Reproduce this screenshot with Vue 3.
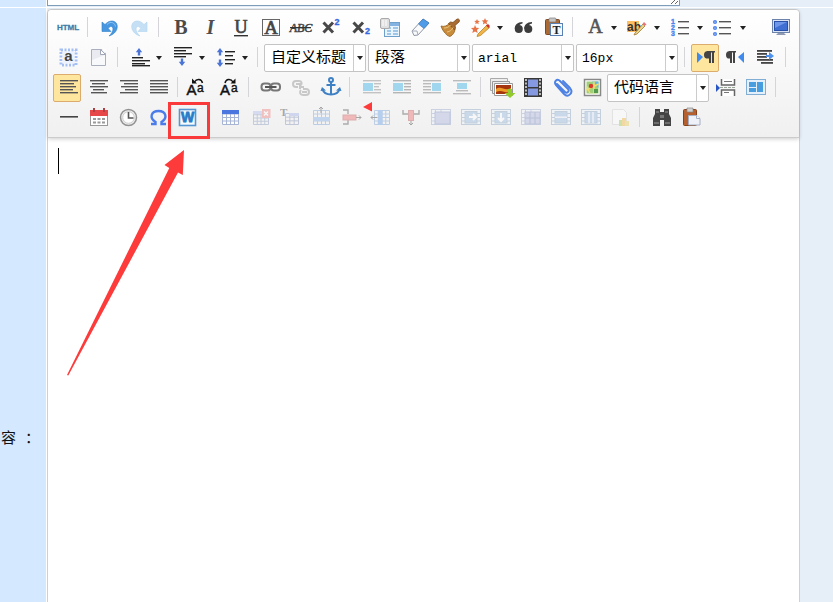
<script setup>
import { ref } from 'vue'

const rule = (y, x1, x2, c = '#333', h = 1.4) =>
  `<rect x="${x1}" y="${y}" width="${x2 - x1}" height="${h}" fill="${c}"/>`
const rules = (list, c, h) => list.map(([y, a, b]) => rule(y, a, b, c, h)).join('')
const serif = 'font-family="Liberation Serif" font-weight="700"'
const sans = 'font-family="Liberation Sans" font-weight="700"'
const up = (x, y) => `<path d="M${x} ${y}l3.2 4.2h-2v3.3h-2.4v-3.3h-2z" fill="#4a74d8"/>`
const down = (x, y) => `<path d="M${x} ${y}l3.2-4.2h-2v-3.3h-2.4v3.3h-2z" fill="#4a74d8"/>`
const grid = (x, y, w, h, nx, ny, c) => {
  let d = `M${x} ${y}h${w}v${h}h${-w}z`
  for (let i = 1; i < nx; i++) d += `M${x + (w * i) / nx} ${y}v${h}`
  for (let i = 1; i < ny; i++) d += `M${x} ${y + (h * i) / ny}h${w}`
  return `<path d="${d}" fill="none" stroke="${c}"/>`
}
const cells = (inner) =>
  `<rect x="1.5" y="2.5" width="19" height="15" fill="#eef2fb" stroke="#8fa3c8"/><path d="M5.5 2.5v15M1.5 6.5h4M1.5 10.5h4M1.5 14h4M11 2.5v3" stroke="#8fa3c8" fill="none"/>${inner}`
const strip = (inner) =>
  `<rect x="1.5" y="2.5" width="19" height="15" fill="#eef4fb" stroke="#7f9dc0"/><path d="M1.5 6.5h19M1.5 10.5h19M1.5 14h19" stroke="#7f9dc0"/><rect x="5" y="4.5" width="12" height="11.5" fill="#8db4dc" stroke="#7f9dc0"/>${inner}`
const undoPath = 'M3 5v9.5h9L9.3 11.5C11 8.5 14 9 14 12c0 2.5-1.8 5-4 7 6-2 8.7-6 8.2-10.5C17.5 3.5 11 2 6 7.5z'

const icons = {
  html: `<text x="10" y="13" text-anchor="middle" font-size="8" ${sans} fill="#3b7ca8" stroke="#3b7ca8" stroke-width=".3">HTML</text>`,
  undo: `<path d="${undoPath}" fill="#4697e0" stroke="#2f7fcb" stroke-width=".6"/><path d="M8 7.5c4-4 8-1.5 8.5 2" stroke="#8cc5f3" fill="none"/>`,
  redo: `<g transform="matrix(-1 0 0 1 21 0)"><path d="${undoPath}" fill="#c5e0f5" stroke="#b0d3ee" stroke-width=".6"/></g>`,
  bold: `<text x="11" y="17" text-anchor="middle" font-size="20" ${serif} fill="#4a4a4a">B</text>`,
  italic: `<text x="10.5" y="17" text-anchor="middle" font-size="20" font-style="italic" ${serif} fill="#4f4f4f">I</text>`,
  underline: `<text x="11" y="16" text-anchor="middle" font-size="18" font-family="Liberation Serif" fill="#444" stroke="#444" stroke-width=".7">U</text>` + rule(18, 4, 18),
  fontborder: `<rect x="2.5" y="2.5" width="17" height="16" fill="none" stroke="#666"/><text x="11" y="16.5" text-anchor="middle" font-size="19" font-family="Liberation Serif" fill="#444" stroke="#444" stroke-width=".7">A</text>`,
  strike: `<text x="11" y="15" text-anchor="middle" font-size="12" font-style="italic" font-family="Liberation Serif" fill="#444" stroke="#444" stroke-width=".5" >ABC</text>` + rule(10, 0, 21, '#333', 1.3),
  sup: `<path d="M3.5 5.5l9.5 10M13 5.5l-9.5 10" stroke="#484848" stroke-width="3"/><text x="14.5" y="8" font-size="9" ${sans} fill="#3568e0" stroke="#3568e0" stroke-width=".3">2</text>`,
  sub: `<path d="M3.5 5.5l9.5 10M13 5.5l-9.5 10" stroke="#484848" stroke-width="3"/><text x="15" y="17" font-size="9" ${sans} fill="#3568e0" stroke="#3568e0" stroke-width=".3">2</text>`,
  autotype: `<rect x="4.5" y="5.5" width="15" height="14" fill="#eaf4fd" stroke="#6f9fcb"/><path d="M5 7.5h14" stroke="#84b3e1" stroke-width="3"/><path d="M7 11h4m2 0h5M7 14h4m2 0h5M7 17h4m2 0h5" stroke="#88b6e1" stroke-width="1.5"/><rect x=".5" y="1.5" width="9" height="10" rx="1.5" fill="#e0e0e0" stroke="#aaa"/><path d="M3 3v6M6 3v6" stroke="#fff"/>`,
  eraser: `<path d="M2 14L13 2l6 4L8 18l-4 .5z" fill="#fafafa" stroke="#8c98ab"/><path d="M8.5 7L13 2l6 4-5 5.5z" fill="#4e9ce8" stroke="#3978be" stroke-width=".7"/><path d="M8 18l-1-4-5 0" fill="none" stroke="#a6adb9"/>`,
  brush: `<path d="M1 9c3 1 6 0 8-2.500l6 5.500c0 3-2 6-5 7.500-2-.5-3.500-1.500-4.500-3C3.500 14.500 2 12 1 9z" fill="#c98b3c" stroke="#94601d" stroke-width=".8"/><path d="M8.500 6.500l2-1.500 2.500.5 4-3.500c2.500-.5 3 1.500 2 3l-4 3.500.500 2.500-1 2z" fill="#a96c33" stroke="#7c4a17" stroke-width=".8"/><path d="M4 11c3 0 5-1 6.500-3M7 15c3-.5 5-2 6-4.500" fill="none" stroke="#ecc57c"/>`,
  wand: `<path d="M8 17l9-9 2.5 2.5-9 8-3.5 1z" fill="#f0b548" stroke="#b98026" stroke-width=".8"/><path d="M16 8.500l2-1.500 2 2-1.500 2z" fill="#c43335"/><g fill="#e87347"><path d="M5 8l1.200 2.700 3 .3-2.300 2 .8 3L5 14.500 2.300 16l.8-3L1 11l3-.3z"/><path d="M7 2l.8 1.700 2 .3-1.500 1.300.4 2L7 6.300 5.300 7.300l.4-2L4.200 4l2-.3zM15 1l1 2.200 2.400.3-1.800 1.600.5 2.400L15 6.300l-2.100 1.200.5-2.400-1.800-1.600 2.400-.3z"/></g>`,
  quote: `<g fill="#3c3c3c"><circle cx="5.800" cy="12" r="4"/><path d="M1.800 12C1.500 8 4.500 5 9.500 5v1.500C7 7 6 8 6 10z"/><circle cx="15.300" cy="12" r="4"/><path d="M11.300 12C11 8 14 5 19 5v1.500c-2.500.5-3.500 1.500-3.500 3.500z"/></g>`,
  pasteText: `<rect x="2.5" y="2.5" width="14" height="15" rx="1" fill="#a96a35" stroke="#7f4820"/><rect x="6" y="1" width="7" height="4" rx="1" fill="#c6c6c6" stroke="#7d7d7d" stroke-width=".7"/><rect x="7.5" y="6.5" width="12" height="12" fill="#f4f8ff" stroke="#5a80b3"/><text x="13.5" y="16.5" text-anchor="middle" font-size="12" ${serif} fill="#222">T</text>`,
  color: `<text x="11.5" y="16" text-anchor="middle" font-size="20" font-family="Liberation Serif" fill="#555" stroke="#555" stroke-width=".6">A</text>`,
  highlight: `<rect x="0" y="4" width="12" height="11" fill="#fbc063"/><text x="0" y="13.5" font-size="12" ${sans} fill="#333">ab</text><path d="M8 16l8-9 2 2-8 8-3 1z" fill="#ead48a" stroke="#a07a36" stroke-width=".8"/><path d="M15.5 7l1.5-2 2.5 2.5-2 1.5z" fill="#e5757c"/>`,
  ol: `<g font-size="7" ${sans} fill="#4f82ed" stroke="#4f82ed" stroke-width=".4"><text x="1" y="7">1</text><text x="1" y="13">2</text><text x="1" y="19">3</text></g>` + rules([[4, 8, 19], [10, 8, 19], [16, 8, 19]], '#555'),
  ul: `<g fill="none" stroke="#4f82ed" stroke-width="1.5"><circle cx="2" cy="5" r="1.3"/><circle cx="2" cy="11" r="1.3"/><circle cx="2" cy="17" r="1.3"/></g>` + rules([[4, 6, 18], [10, 6, 18], [16, 6, 18]], '#555'),
  screen: `<rect x="1.5" y="2.5" width="17" height="13" fill="#d9e3f5" stroke="#6e83aa"/><rect x="3.5" y="4.5" width="13" height="9" fill="#3f6fd2" stroke="#2850a7"/><path d="M4 5h12L4 11z" fill="#6e97ea"/><path d="M7 16h6l2 2H5z" fill="#8e9bb2"/>`,
  anchorText: `<rect x="3" y="3" width="15" height="15" fill="none" stroke="#a5bff4" stroke-width="3" stroke-dasharray="2 1.5"/><rect x="4.5" y="4.5" width="12" height="12" fill="#edf2ff"/><text x="10.5" y="14" text-anchor="middle" font-size="15" ${sans} fill="#444">a</text>`,
  page: `<path d="M3.5 2.5h14v16h-14z" fill="#e9ebf0" stroke="#a9afbd"/><path d="M4 13L17 8v10H4z" fill="#f8f9fb"/><path d="M12.5 2.5l5 5h-5z" fill="#fff" stroke="#a0a7b7"/><path d="M13.5 2h4.5v4.5z" fill="#fdfdfd"/>`,
  rowBefore: up(10, 1) + rules([[10, 3, 14], [13, 3, 21], [16, 3, 16], [18, 3, 21]], '#222', 1.4),
  rowAfter: rules([[0, 2, 20], [3, 2, 14], [6, 2, 20], [9, 2, 14]], '#222', 1.4) + down(10, 19),
  lineHeight: up(5, 1) + down(5, 20) + rules([[4, 10, 20], [8, 10, 18], [12, 10, 20], [16, 10, 18]], '#222', 1.4),
  ltr: `<path d="M1 5l6 5-6 6z" fill="#4089ed"/><path d="M8 8c0-4 3-4 5-4h6v1.500h-1V16h-2V5.500h-1V16h-2v-4.500C10 12 8 11 8 8z" fill="#444"/>`,
  rtl: `<path d="M18 5l-6 5 6 6z" fill="#4089ed"/><path d="M0 8c0-4 3-4 5-4h5v1.500H9V16H7V5.500H6V16H4v-4.500C2 12 0 11 0 8z" fill="#444"/>`,
  indent: rules([[3, 1, 16], [6, 1, 11], [9, 1, 11], [12, 1, 17], [15, 5, 17]], '#444', 1.8) + `<path d="M10 8h3V5l5 4-5 4v-3h-3z" fill="#4e91ee"/>`,
  left: rules([[3, 2, 20], [6, 2, 16], [9, 2, 18], [12, 2, 15], [15, 2, 20]], '#555'),
  center: rules([[3, 2, 20], [6, 4, 17], [9, 2, 20], [12, 5, 16], [15, 3, 19]], '#555'),
  right: rules([[3, 2, 20], [6, 6, 20], [9, 3, 20], [12, 7, 20], [15, 2, 20]], '#555'),
  justify: rules([[3, 2, 20], [6, 2, 20], [9, 2, 20], [12, 2, 20], [15, 2, 20]], '#555'),
  upper: `<text x="-2.5" y="18" font-size="15" font-family="Liberation Sans" fill="#111" stroke="#111" stroke-width=".5">A</text><text x="8" y="15" font-size="12" font-family="Liberation Sans" fill="#111" stroke="#111" stroke-width=".4">a</text><path d="M13.500 6c-1-4.500-6-4.500-8-1" fill="none" stroke="#111" stroke-width="1.500"/><path d="M3 1.500v5h5z" fill="#111"/>`,
  lower: `<text x="1" y="18" font-size="15" font-family="Liberation Sans" fill="#111" stroke="#111" stroke-width=".5">A</text><text x="12" y="15" font-size="12" font-family="Liberation Sans" fill="#111" stroke="#111" stroke-width=".4">a</text><path d="M6 6c1-4.500 6-4.500 8-1" fill="none" stroke="#111" stroke-width="1.500"/><path d="M16.500 1.500v5h-5z" fill="#111"/>`,
  link: `<g fill="none" stroke="#777" stroke-width="2"><rect x="1.5" y="6.5" width="9" height="7" rx="3"/><rect x="11" y="6.5" width="9" height="7" rx="3"/></g><path d="M5 10h11.500" stroke="#555" stroke-width="2"/>`,
  unlink: `<g fill="none" stroke="#c8c8c8" stroke-width="2"><path d="M8 10H6c-4 0-4-6 0-6h3c3 0 3 3 2 4M6 7h4v5M10 7h2"/><path d="M13 12h3c4 0 4 6 0 6h-3c-3 0-4-3-2-5M17 15h-5M11 10h3"/></g>`,
  anchor: `<g fill="none" stroke="#3e80c4" stroke-width="2"><circle cx="11" cy="3" r="2"/><path d="M11 5v13M6.5 8h9M2.5 12c1 4 5 5.5 8.5 5.5s7.500-1.500 8.500-5.500"/></g><path d="M.5 14l1.500-4 4 3.500zM21.500 14L20 10l-4 3.500z" fill="#3e80c4"/>`,
  imgLeft: `<rect x="2" y="6" width="10" height="8" fill="#a0d6ee"/>` + rules([[3, 2, 20], [6, 13, 20], [9, 13, 18], [12, 13, 20], [15, 2, 20]], '#c2c2c2'),
  imgFloat: `<rect x="2" y="6" width="10" height="8" fill="#a0d6ee"/>` + rules([[3, 2, 20], [6, 13, 20], [9, 13, 20], [12, 13, 20], [15, 2, 20]], '#b5b5b5'),
  imgRight: `<rect x="11" y="6" width="9" height="8" fill="#a0d6ee"/>` + rules([[3, 2, 20], [6, 2, 10], [9, 2, 10], [12, 2, 10], [15, 2, 20]], '#bbb'),
  imgCenter: `<rect x="6" y="6" width="10" height="6" fill="#a0d6ee"/>` + rules([[3, 2, 20], [13, 5, 17], [16, 2, 20]], '#bbb'),
  images: `<path d="M-1.5 1.5h17v12h-17z" fill="#eee" stroke="#aaa"/><path d="M.5 4.5h17v12H.5z" fill="#eee" stroke="#999"/><path d="M2.500 6.500h18v12h-18z" fill="#fff" stroke="#999"/><path d="M4 8h15v9H4z" fill="#a5350e"/><path d="M4 12c5-4 9 3 15-1v4c-6 2-9-3-15 0z" fill="#ef9b28"/><path d="M16 12h4v4h3.500l-5.500 5-5.500-5H16z" fill="#93cb2c"/>`,
  video: `<rect x="2" y="1" width="18" height="19" fill="#383838"/><path d="M6 2.500h10v7.500H6zM6 11.500h10v7H6z" fill="#8599e0"/><path d="M4 2v17M18 2v17" stroke="#ddd" stroke-width="1.600" stroke-dasharray="2 1.500"/>`,
  attach: `<path d="M5 7l8 8c2 2 5-1 3-3L8 4C5 1 1 5 4 8l8 9c4 4 10-1 6-6l-7-7" fill="none" stroke="#4d81e4" stroke-width="1.9" stroke-linecap="round"/>`,
  map: `<rect x="2.5" y="2.5" width="16" height="16" fill="#fff" stroke="#888" stroke-width="1.5"/><rect x="4.500" y="4.500" width="12" height="12" fill="#9fcf78"/><path d="M10 4.500h6.500V11z" fill="#63b8de"/><path d="M4.500 13l12-6M8 16.500l-3-7M12 4.500v12" stroke="#efdc6d" fill="none" stroke-width="1.5"/><circle cx="9" cy="9" r="2.2" fill="#d83a2c"/><path d="M12 12h4v4h-4z" fill="#55994c"/>`,
  pagebreak: `<path d="M0 7l4 4-4 4z" fill="#2857c4"/><path d="M5.5 2v6h13V2M5.5 19v-6h13v6" fill="#fff" stroke="#666" stroke-width="1.5"/><path d="M8 4.5h8M8 15.5h5" stroke="#777"/><path d="M4 10.5h16" stroke="#9ba59a" stroke-dasharray="3 1"/>`,
  template: `<rect x=".5" y="2.5" width="19" height="15" fill="#e3f0fb" stroke="#82aed4"/><path d="M3 5h7v5H3zM3 11h7v4H3zM11 5h6v10h-6z" fill="#479ddd"/>`,
  hr: rule(9, 2, 20, '#444', 1.6),
  date: `<rect x="2.5" y="3.5" width="17" height="15" fill="#fff" stroke="#999"/><path d="M2 3h18v6H2z" fill="#e6484a"/><path d="M6 1v4M16 1v4" stroke="#ad3f42" stroke-width="2"/><path d="M5 12h3m1.5 0h3m1.5 0h3M5 15.5h3m1.5 0h3m1.5 0h3" stroke="#999" stroke-width="2"/>`,
  time: `<circle cx="10.5" cy="10.5" r="8" fill="#eee" stroke="#929292" stroke-width="1.5"/><circle cx="10.5" cy="10.5" r="5.8" fill="#fff" stroke="#ccc"/><path d="M10.5 5v6h5" fill="none" stroke="#555" stroke-width="1.6"/>`,
  omega: `<path d="M3 17h4.5v-2C1 11 3 4 10.500 4s9.500 7 3 11v2H18" fill="none" stroke="#4b7ce9" stroke-width="2.4"/>`,
  word: `<rect x="1.500" y="2.500" width="16" height="16" fill="#f5faff" stroke="#5396d1" stroke-width="1.600"/><text x="9.500" y="15" text-anchor="middle" font-size="14" ${sans} fill="#287bc6" stroke="#287bc6" stroke-width=".8">W</text>`,
  table: `<rect x="2" y="3" width="16" height="15" fill="#fff"/>` + grid(2.5, 3.5, 16, 14, 4, 4, '#a6b5d5') + `<path d="M2 3h17v4H2z" fill="#4a76e0"/>`,
  tableDelete: grid(3.5, 4.5, 15, 13, 4, 4, '#7e93bd') + `<path d="M3 4h16v3H3z" fill="#a9baf0"/><rect x="12" y="2" width="8.500" height="9" fill="#ef7777"/><path d="M14 4.500l4 4m0-4l-4 4" stroke="#fff" stroke-width="1.5"/>`,
  tableTitle: `<text x="0" y="9" font-size="11" ${serif} fill="#333">T</text>` + grid(5.5, 6.5, 13, 11, 3, 3, '#7788b5') + `<path d="M9 6h10v3H9z" fill="#9bade6"/>`,
  rowInsert: grid(3.5, 3.5, 16, 14, 4, 4, '#6f9ad0') + `<path d="M3 10h17v4H3z" fill="#78aae8"/><path d="M11 6V0m-2 2l2-2 2 2" fill="none" stroke="#333"/>`,
  rowDelete: `<path d="M3 3h5v4M3 17h5v-4" fill="none" stroke="#444" stroke-width="1.4"/><rect x="3" y="8" width="13" height="5" fill="#ee6262" stroke="#b84b4b"/><path d="M16 10.5h5m-2-2l2 2-2 2" fill="none" stroke="#333"/>`,
  colInsert: grid(4.5, 3.5, 15, 14, 4, 4, '#6f9ad0') + `<path d="M8 3h4.500v15H8z" fill="#5c9ae8"/><path d="M7 10.5H1m2-2l-2 2 2 2" fill="none" stroke="#333"/>`,
  colDelete: `<path d="M3 3v4h5M19 3v4h-5" fill="none" stroke="#444" stroke-width="1.4"/><rect x="8.500" y="3.500" width="5" height="10" fill="#ee6262" stroke="#b84b4b"/><path d="M11 14v4m-2-2l2 2 2-2" fill="none" stroke="#333"/>`,
  merge: cells('<rect x="5" y="5" width="15" height="12" fill="#a9b1dc" stroke="#7485bd"/>'),
  mergeRight: strip('<path d="M9 10h7m-3-3l3 3-3 3" stroke="#fff" stroke-width="2" fill="none"/>'),
  mergeDown: strip('<path d="M11 6v8m-3-3l3 3 3-3" stroke="#fff" stroke-width="2" fill="none"/>'),
  split: cells('<rect x="5" y="5" width="15" height="12" fill="#a9b1dc" stroke="#7485bd"/><path d="M10 5v12M15 5v12M5 11h15" stroke="#657bab"/>'),
  splitRows: strip('<path d="M5 10.2h12" stroke="#eef" stroke-width="1.5"/>'),
  splitCols: strip('<path d="M9 5v11M13 5v11" stroke="#eef" stroke-width="1.5"/>'),
  chart: `<path d="M2.5 2.5h11l3 3v12h-14z" fill="#fff" stroke="#ccc"/><path d="M9 13h4v6H9z" fill="#8ecb43"/><path d="M12 11h4v8h-4z" fill="#f2b431"/><path d="M15 14h4v5h-4z" fill="#e8cc4c"/>`,
  search: `<path d="M3 2h5v3h4V2h5v5l2 4v8h-7v-6H8v6H1v-8l2-4z" fill="#444"/><path d="M4 5h3m6 0h3M2 16h5m6 0h5" stroke="#999"/><path d="M8 8h4v3H8z" fill="#777"/>`,
  paste: `<rect x="1.5" y="2.5" width="13" height="16" rx="1" fill="#b66030" stroke="#884019"/><path d="M5 1h6v4H5z" fill="#d0d0cf" stroke="#888" stroke-width=".7"/><path d="M6.500 8.500h8l3.500 3v6.500H6.500z" fill="#eef1f8" stroke="#a4aec4"/><path d="M14.500 8.500v3H18" fill="#fff" stroke="#a4aec4"/>`
}

const b = (icon, label, extra = {}) => ({ kind: 'button', icon, label, ...extra })
const c = (icon, label) => b(icon, label, { menu: true })
const off = (icon, label) => b(icon, label, { disabled: true })
const s = (label, options, latin = false) => ({ kind: 'select', label, options, latin })
const sep = { kind: 'sep' }

const rows = [
  [b('html', '源代码'), sep, b('undo', '撤销'), b('redo', '重做'), sep,
    b('bold', '加粗'), b('italic', '斜体'), b('underline', '下划线'), b('fontborder', '字符边框'), b('strike', '删除线'),
    b('sup', '上标'), b('sub', '下标'), b('autotype', '清除格式'), b('eraser', '擦除'), b('brush', '格式刷'),
    c('wand', '自动排版'), b('quote', '引用'), b('pasteText', '纯文本粘贴'), sep,
    c('color', '字体颜色'), c('highlight', '背景色'), c('ol', '有序列表'), c('ul', '无序列表'), { kind: 'space' }, b('screen', '全屏')],
  [b('anchorText', '全选'), b('page', '清空文档'), sep, c('rowBefore', '段前距'), c('rowAfter', '段后距'), c('lineHeight', '行间距'), sep,
    s('标题样式', ['自定义标题']), s('段落格式', ['段落']), s('字体', ['arial'], true), s('字号', ['16px'], true), sep,
    b('ltr', '从左向右输入', { active: true }), b('rtl', '从右向左输入'), b('indent', '首行缩进'), sep],
  [b('left', '居左对齐', { active: true }), b('center', '居中对齐'), b('right', '居右对齐'), b('justify', '两端对齐'), sep,
    b('upper', '字母大写'), b('lower', '字母小写'), sep, b('link', '超链接'), b('unlink', '取消链接'), b('anchor', '锚点'), sep,
    b('imgLeft', '默认'), b('imgFloat', '左浮动'), b('imgRight', '右浮动'), b('imgCenter', '居中'), sep,
    b('images', '多图上传'), b('video', '视频'), b('attach', '附件'), b('map', '地图'), s('代码语言', ['代码语言']),
    b('pagebreak', '分页'), b('template', '模板'), sep],
  [b('hr', '分隔线'), b('date', '日期'), b('time', '时间'), b('omega', '特殊字符'), b('word', 'Word 导入', { marked: true }), sep,
    b('table', '插入表格'), off('tableDelete', '删除表格'), off('tableTitle', '表格标题'), off('rowInsert', '插入行'), off('rowDelete', '删除行'),
    off('colInsert', '插入列'), off('colDelete', '删除列'), off('merge', '合并单元格'), off('mergeRight', '右合并'), off('mergeDown', '下合并'),
    off('split', '拆分单元格'), off('splitRows', '拆分成行'), off('splitCols', '拆分成列'), off('chart', '图表'), sep,
    b('search', '查询替换'), b('paste', '粘贴')]
]

const content = ref('')
const summary = ref('')
</script>

<template>
  <main class="form">
    <div class="line line-top">
      <div class="label-cell"></div>
      <div class="field-cell summary-cell">
        <textarea v-model="summary" class="summary" aria-label="摘要"></textarea>
      </div>
    </div>
    <div class="line">
      <div class="label-cell"><label for="content">容 ：</label></div>
      <div class="field-cell">
        <section class="editor">
          <div class="toolbar" role="toolbar" aria-label="编辑工具">
            <div v-for="(row, r) in rows" :key="r" class="row">
              <template v-for="(item, i) in row" :key="i">
                <span v-if="item.kind === 'sep'" class="sep"></span>
                <span v-else-if="item.kind === 'space'" class="space"></span>
                <span v-else-if="item.kind === 'select'" class="combo" :class="{ latin: item.latin }">
                  <select :aria-label="item.label">
                    <option v-for="o in item.options" :key="o">{{ o }}</option>
                  </select>
                  <span class="combo-arrow"><i class="caret-down"></i></span>
                </span>
                <button
                  v-else
                  type="button"
                  class="tool"
                  :class="{ active: item.active, menu: item.menu, marked: item.marked }"
                  :aria-label="item.label"
                  :disabled="item.disabled"
                >
                  <svg viewBox="0 0 20 20" aria-hidden="true" v-html="icons[item.icon]"></svg>
                  <i v-if="item.menu" class="caret-down"></i>
                </button>
              </template>
            </div>
          </div>
          <div class="writing">
            <textarea id="content" v-model="content"></textarea>
            <span class="text-caret"></span>
          </div>
          <svg class="pointer" viewBox="0 0 320 290" aria-hidden="true">
            <path d="M136 140L116.500 155l4.800 3L19 365l1.300.6L130 162.500l4.800 2.500z" />
            <path d="M315 97l9-5v9.500z" />
          </svg>
        </section>
      </div>
    </div>
  </main>
</template>

<style>
body {
  background: #e6eef8;
}
</style>

<style scoped>
.form {
  height: 100vh;
  overflow: hidden;
  background: #e6eef8;
  font-family: "Liberation Mono", "Noto Sans CJK SC", monospace;
}
.line {
  display: flex;
  height: 858px;
}
.line-top {
  height: 7px;
  border-bottom: 1px solid #fff;
}
.label-cell {
  box-sizing: border-box;
  flex: none;
  width: 47px;
  padding-right: 6px;
  border-right: 1px solid #fff;
  display: flex;
  align-items: center;
  justify-content: flex-end;
  background: #d4e8ff;
  color: #111;
  font-size: 15px;
  white-space: nowrap;
}
.field-cell {
  flex: 1;
  min-width: 0;
  padding-right: 33px;
}
.summary-cell {
  box-sizing: border-box;
  display: flex;
  align-items: flex-end;
  height: 6px;
  padding-bottom: 0;
}
.summary {
  box-sizing: border-box;
  width: 633px;
  height: 60px;
  border: 1px solid #7f9db9;
  background: #fff;
}
.editor {
  position: relative;
  margin-top: 1px;
  border: 1px solid #d0d0d0;
  border-radius: 4px;
  background: #fff;
}
.toolbar {
  padding: 4px 0 3px 5px;
  border-bottom: 1px solid #ccc;
  border-radius: 4px 4px 0 0;
  background: linear-gradient(#fff, #f0f0f0);
  box-shadow: 0 1px 4px rgba(0, 0, 0, 0.2);
}
.row {
  display: flex;
  height: 28px;
  margin-bottom: 2px;
}
.tool {
  position: relative;
  box-sizing: border-box;
  flex: none;
  width: 28px;
  height: 28px;
  margin: 0 2px 0 0;
  padding: 2px 2px 4px 4px;
  border: 1px solid transparent;
  border-radius: 2px;
  background: none;
  display: flex;
}
.tool svg {
  flex: none;
  width: 20px;
  height: 20px;
  overflow: visible;
}
.tool.menu {
  width: 43px;
  margin: 0;
}
.tool.menu .caret-down {
  margin: 9px 0 0 7px;
}
.tool.active {
  border-color: #dcac6c;
  background: #ffe69f;
}
.tool:disabled svg {
  opacity: 0.4;
}
.marked::after {
  content: "";
  position: absolute;
  inset: -3px -10px -8px -6px;
  border: 3px solid #fa3a3a;
}
.caret-down {
  width: 0;
  height: 0;
  border: 3px solid transparent;
  border-top: 4px solid #222;
  border-bottom: 0;
}
.sep {
  flex: none;
  width: 11px;
  height: 20px;
  margin-top: 3px;
  background: linear-gradient(#d5d5d9, #d5d5d9) 4px 0 / 1px 20px no-repeat;
}
.row:last-child .sep {
  width: 12px;
}
.space {
  flex: none;
  width: 15px;
}
.combo {
  box-sizing: border-box;
  flex: none;
  display: flex;
  width: 102px;
  height: 28px;
  margin-right: 2px;
  border: 1px solid #c4c4c4;
  border-radius: 2px;
  background: #fff;
}
.combo select {
  appearance: none;
  flex: 1;
  min-width: 0;
  margin: 0;
  padding: 0 0 0 6px;
  border: 0;
  background: none;
  color: #000;
  font-family: "Liberation Mono", "Noto Sans CJK SC", monospace;
  font-size: 15px;
  text-overflow: clip;
}
.combo.latin select {
  padding-left: 5px;
  font-size: 13px;
}
.combo-arrow {
  flex: none;
  display: flex;
  align-items: center;
  justify-content: center;
  width: 11px;
  border-left: 1px solid #ccc;
  pointer-events: none;
}
.writing {
  position: relative;
}
.writing textarea {
  display: block;
  box-sizing: border-box;
  width: 100%;
  height: 720px;
  padding: 10px;
  border: 0;
  outline: 0;
  resize: none;
  background: none;
  font: 16px "Liberation Sans", "Noto Sans CJK SC", sans-serif;
}
.text-caret {
  position: absolute;
  left: 10px;
  top: 10px;
  width: 1px;
  height: 26px;
  background: #000;
}
.pointer {
  position: absolute;
  left: 0;
  top: 0;
  width: 320px;
  height: 290px;
  overflow: visible;
  fill: #fc3b3a;
  pointer-events: none;
}
</style>
